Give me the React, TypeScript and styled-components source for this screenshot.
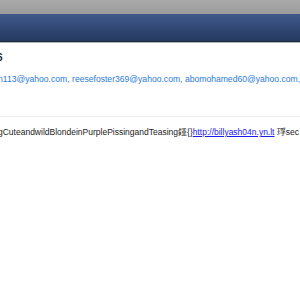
import React from "react";
import styled, { createGlobalStyle } from "styled-components";

const Global = createGlobalStyle`
  html, body { margin: 0; padding: 0; background: #ffffff; }
  body { font-family: "Liberation Sans", Arial, sans-serif; overflow: hidden; }
`;

const Page = styled.div`
  width: 300px;
  height: 300px;
  overflow: hidden;
  display: flex;
  flex-direction: column;
`;

const TopStrip = styled.div`
  height: 14px;
  background: linear-gradient(#a9a9a9, #9c9c9c);
`;

const NavBar = styled.div`
  height: 27px;
  background: linear-gradient(#40598a, #2f4670 60%, #253a5f);
  border-bottom: 1px solid #1b2840;
  box-shadow: 0 1px 0 #b8b8b8;
`;

const Content = styled.div`
  display: flex;
  flex-direction: column;
  margin-left: -3px;
  white-space: nowrap;
`;

const Heading = styled.div`
  margin-top: 9px;
  font-size: 10px;
  font-weight: bold;
  color: #222;
  height: 13px;
  line-height: 13px;
`;

const Recipients = styled.div`
  margin-top: 10px;
  font-size: 8.6px;
  line-height: 11px;
  color: #2b7bd6;
  margin-left: 1px;
`;

const Divider = styled.div`
  margin-top: 31px;
  margin-left: 3px;
  height: 1px;
  background: #eeeeee;
`;

const Body = styled.div`
  margin-top: 10px;
  font-size: 8.5px;
  line-height: 11px;
  color: #222;
  margin-left: 1px;
`;

const Link = styled.a`
  color: #1a1aee;
  text-decoration: underline;
`;

export default function App() {
  return (
    <Page>
      <Global />
      <TopStrip />
      <NavBar />
      <Content>
        <Heading>6</Heading>
        <Recipients>
          n113@yahoo.com, reesefoster369@yahoo.com, abomohamed60@yahoo.com, b
        </Recipients>
        <Divider />
        <Body>
          gCuteandwildBlondeinPurplePissingandTeasing鍾{"{}"}
          <Link href="#">http://billyash04n.yn.lt</Link> 琈sec
        </Body>
      </Content>
    </Page>
  );
}
